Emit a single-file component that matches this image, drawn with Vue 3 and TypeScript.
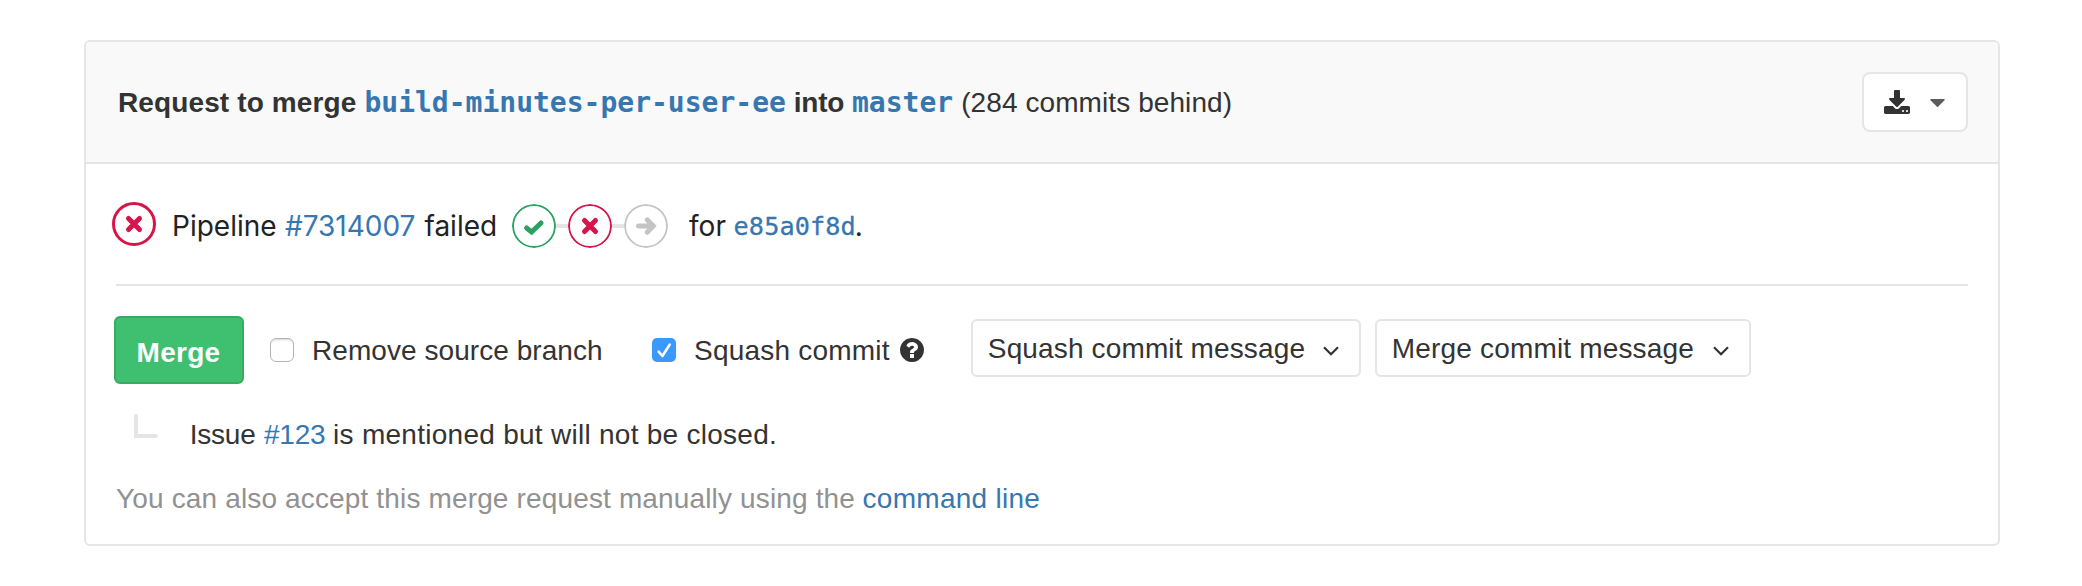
<script setup lang="ts">
import { ref } from 'vue'

const removeSourceBranch = ref(false)
const squashCommit = ref(true)

const messageToggles = [
  { id: 'squash', label: 'Squash commit message' },
  { id: 'merge', label: 'Merge commit message' },
]

const stages = [
  { status: 'success', path: 'M14.6 24 L19.6 28 L29 19' },
  { status: 'failed', path: 'M16.5 16.5 L27.5 27.5 M27.5 16.5 L16.5 27.5' },
  { status: 'skipped', path: 'M14.5 22 H28 M23.2 15.8 L29.2 22 L23.2 28.2' },
]
</script>

<template>
  <section class="widget">
    <header class="head">
      <p class="title">
        <b class="request">Request to merge</b>
        <a class="branch">build-minutes-per-user-ee</a>
        <b class="into">into</b>
        <a class="branch">master</a>
        <span class="behind">(284 commits behind)</span>
      </p>
      <button class="download" type="button" aria-label="Download">
        <svg class="tray" viewBox="0 0 1664 1536">
          <path d="M1280 1344q0-26-19-45t-45-19-45 19-19 45 19 45 45 19 45-19 19-45zm256 0q0-26-19-45t-45-19-45 19-19 45 19 45 45 19 45-19 19-45zm128-224v320q0 40-28 68t-68 28h-1472q-40 0-68-28t-28-68v-320q0-40 28-68t68-28h465l135 136q58 56 136 56t136-56l136-136h464q40 0 68 28t28 68zm-325-569q17 41-14 70l-448 448q-18 19-45 19t-45-19l-448-448q-31-29-14-70 17-39 59-39h256v-448q0-26 19-45t45-19h256q26 0 45 19t19 45v448h256q42 0 59 39z" />
        </svg>
        <svg class="caret" viewBox="0 0 16 9"><path d="M1 0H15Q16.2 .2 15.4 1.2L8.6 8.2Q8 8.7 7.4 8.2L.6 1.2Q-.2 .2 1 0Z" /></svg>
      </button>
    </header>

    <div class="pipeline">
      <svg class="status failed" viewBox="0 0 44 44">
        <circle cx="22" cy="22" r="20.5" stroke-width="3" />
        <path d="M16.5 16.5 L27.5 27.5 M27.5 16.5 L16.5 27.5" stroke-width="5" stroke-linecap="round" />
      </svg>
      <span class="word">Pipeline</span>
      <a class="number">#7314007</a>
      <span class="word">failed</span>
      <div class="stages">
        <svg v-for="s in stages" :key="s.status" class="stage" :class="s.status" viewBox="0 0 44 44">
          <circle cx="22" cy="22" r="21" stroke-width="2" />
          <path :d="s.path" stroke-width="5" stroke-linecap="round" />
        </svg>
      </div>
      <span class="word">for</span>
      <a class="sha">e85a0f8d</a>
      <span class="stop">.</span>
    </div>

    <div class="body">
      <div class="actions">
        <button class="merge" type="button"><span>Merge</span></button>
        <label class="option remove">
          <span class="box" :class="{ on: removeSourceBranch }" />
          <span class="caption">Remove source branch</span>
        </label>
        <label class="option squash">
          <span class="box" :class="{ on: squashCommit }">
            <svg v-if="squashCommit" viewBox="0 0 24 24"><path d="M6.6 13.7 L10.4 18 L17.7 6.6" /></svg>
          </span>
          <span class="caption">Squash commit</span>
        </label>
        <svg class="help" viewBox="128 128 1536 1536">
          <path d="M1024 1376v-192q0-14-9-23t-23-9h-192q-14 0-23 9t-9 23v192q0 14 9 23t23 9h192q14 0 23-9t9-23zm256-672q0-88-55.5-163t-138.5-116-170-41q-243 0-371 213-15 24 8 42l132 100q7 6 19 6 16 0 25-12 53-68 86-92 34-24 86-24 48 0 85.5 26t37.5 59q0 38-20 61t-68 45q-63 28-115.5 86.5t-52.5 125.5v36q0 14 9 23t23 9h192q14 0 23-9t9-23q0-19 21.5-49.5t54.5-49.5q32-18 49-28.5t46-35 44.5-48 28-60.5 12.5-81zm384 192q0 209-103 385.5t-279.5 279.5-385.5 103-385.5-103-279.5-279.5-103-385.5 103-385.5 279.5-279.5 385.5-103 385.5 103 279.5 279.5 103 385.5z" />
        </svg>
        <div class="messages">
          <button v-for="m in messageToggles" :key="m.id" class="message" :class="`for-${m.id}`" type="button">
            <span>{{ m.label }}</span>
            <svg class="chevron" viewBox="0 0 16 10"><path d="M1 1.2 L8 8.2 L15 1.2" /></svg>
          </button>
        </div>
      </div>

      <div class="issue">
        <svg class="elbow" viewBox="0 0 24 24"><path d="M2 2 V22 H22" /></svg>
        <span class="lead">Issue</span>
        <a class="ref">#123</a>
        <span class="note">is mentioned but will not be closed.</span>
      </div>

      <div class="manual">
        <span class="hint">You can also accept this merge request manually using the</span>
        <a class="cli">command line</a>
      </div>
    </div>
  </section>
</template>

<style>
body {
  background: #fff;
}
</style>

<style scoped>
.widget {
  box-sizing: border-box;
  width: 1916px;
  height: 506px;
  margin: 40px 0 0 84px;
  border: 2px solid #e5e5e5;
  border-radius: 6px;
  overflow: hidden;
  font: 28px/34px "Liberation Sans", Arial, sans-serif;
  color: #333;
  white-space: nowrap;
}

a {
  color: #3777b0;
}

button {
  box-sizing: border-box;
  display: flex;
  margin: 0;
  padding: 0;
  font: inherit;
  color: inherit;
  background: #fff;
  border: 2px solid #e5e5e5;
}

svg {
  display: block;
  flex: none;
}

.head {
  display: flex;
  align-items: center;
  justify-content: space-between;
  box-sizing: border-box;
  height: 122px;
  padding: 0 30px 0 32px;
  background: #f9f9f9;
  border-bottom: 2px solid #e5e5e5;
}

.title {
  display: flex;
  align-items: baseline;
  gap: 8px;
  margin: 2px 0 0;
}

.request {
  letter-spacing: 0.12px;
}

.into {
  letter-spacing: -0.3px;
}

.behind {
  letter-spacing: 0.09px;
}

.branch {
  font-family: "DejaVu Sans Mono", monospace;
  font-weight: 700;
}

.download {
  align-items: center;
  width: 106px;
  height: 60px;
  padding-left: 20px;
  border-radius: 8px;
}

.tray {
  width: 26px;
  height: 24px;
  fill: #333;
}

.caret {
  width: 15px;
  height: 8.5px;
  margin: 3px 0 0 20px;
  fill: #5c5c5c;
}

.pipeline {
  display: flex;
  align-items: center;
  box-sizing: border-box;
  height: 120px;
  margin-left: 26px;
  padding-top: 4px;
  font-family: Inter, "Liberation Sans", sans-serif;
  line-height: 34px;
  color: #222;
}

.status {
  width: 44px;
  height: 44px;
  margin: 0 16px 4px 0;
}

.status,
.stage {
  fill: none;
  stroke: currentColor;
}

.number {
  margin: 0 9px 0 8.4px;
}

.stages {
  display: flex;
  gap: 12px;
  width: 156px;
  margin: 0 21px 0 14.9px;
  background: linear-gradient(#e5e5e5, #e5e5e5) center / 112px 4px no-repeat;
}

.stage {
  width: 44px;
  height: 44px;
  background: #fff;
  border-radius: 50%;
}

.success {
  color: #2da160;
}

.failed {
  color: #d9144a;
}

.skipped {
  color: #c4c4c4;
}

.sha {
  margin: 1px 0 0 7.7px;
  font-family: "DejaVu Sans Mono", monospace;
  font-size: 25.2px;
  letter-spacing: 0.1px;
  -webkit-text-stroke: 0.3px currentColor;
}

.stop {
  margin-left: -1px;
}

.body {
  margin: 0 30px;
  border-top: 2px solid #e5e5e5;
}

.actions {
  display: flex;
  align-items: center;
  height: 68px;
  margin: 30px 0 0 -2px;
}

.merge {
  justify-content: center;
  align-items: center;
  width: 130px;
  height: 68px;
  padding: 6px 1px 0 0;
  border-color: #38aa62;
  border-radius: 6px;
  background: #3fbf70;
  color: #fff;
  font-weight: 700;
  letter-spacing: 0.3px;
}

.option {
  display: flex;
  align-items: center;
}

.caption,
.message span {
  padding-top: 2px;
}

.remove {
  gap: 18px;
  margin: 0 49.4px 0 26px;
  letter-spacing: 0.06px;
}

.squash {
  gap: 18px;
  letter-spacing: 0.2px;
}

.box {
  box-sizing: border-box;
  width: 24px;
  height: 24px;
  border: 1px solid #b4b4b4;
  border-radius: 6px;
  background: #fff;
  box-shadow: inset 0 2px 2px -1px #d4d4d4;
}

.box.on {
  border: 0;
  border-radius: 5px;
  background: #3b99fc;
  box-shadow: none;
}

.box path {
  fill: none;
  stroke: #fff;
  stroke-width: 2.6;
  stroke-linecap: round;
  stroke-linejoin: round;
}

.help {
  width: 24px;
  height: 24px;
  margin: 0 47px 0 10.2px;
  fill: #333;
}

.messages {
  display: flex;
  gap: 14px;
  margin-bottom: 4px;
}

.message {
  align-items: center;
  height: 58px;
  border-radius: 6px;
}

.for-squash {
  gap: 17.7px;
  width: 390px;
  padding-left: 15px;
  letter-spacing: 0.14px;
}

.for-merge {
  gap: 18.7px;
  width: 376px;
  padding-left: 15px;
  letter-spacing: 0.17px;
}

.chevron {
  width: 16px;
  height: 10px;
  margin-top: 6px;
  fill: none;
  stroke: #333;
  stroke-width: 2.2;
}

.issue {
  display: flex;
  align-items: flex-start;
  height: 32px;
  margin: 34px 0 0 18px;
}

.elbow {
  width: 24px;
  height: 24px;
  margin: -4px 31.7px 0 0;
  fill: none;
  stroke: #e5e5e5;
  stroke-width: 4;
  stroke-linecap: round;
}

.lead {
  letter-spacing: -0.2px;
}

.ref {
  margin: 0 7.7px 0 8.3px;
  letter-spacing: -0.2px;
}

.note {
  letter-spacing: 0.27px;
}

.manual {
  display: flex;
  gap: 7.5px;
  margin-top: 32px;
  color: #919191;
}

.hint {
  letter-spacing: 0.15px;
}

.cli {
  letter-spacing: 0.27px;
}
</style>
